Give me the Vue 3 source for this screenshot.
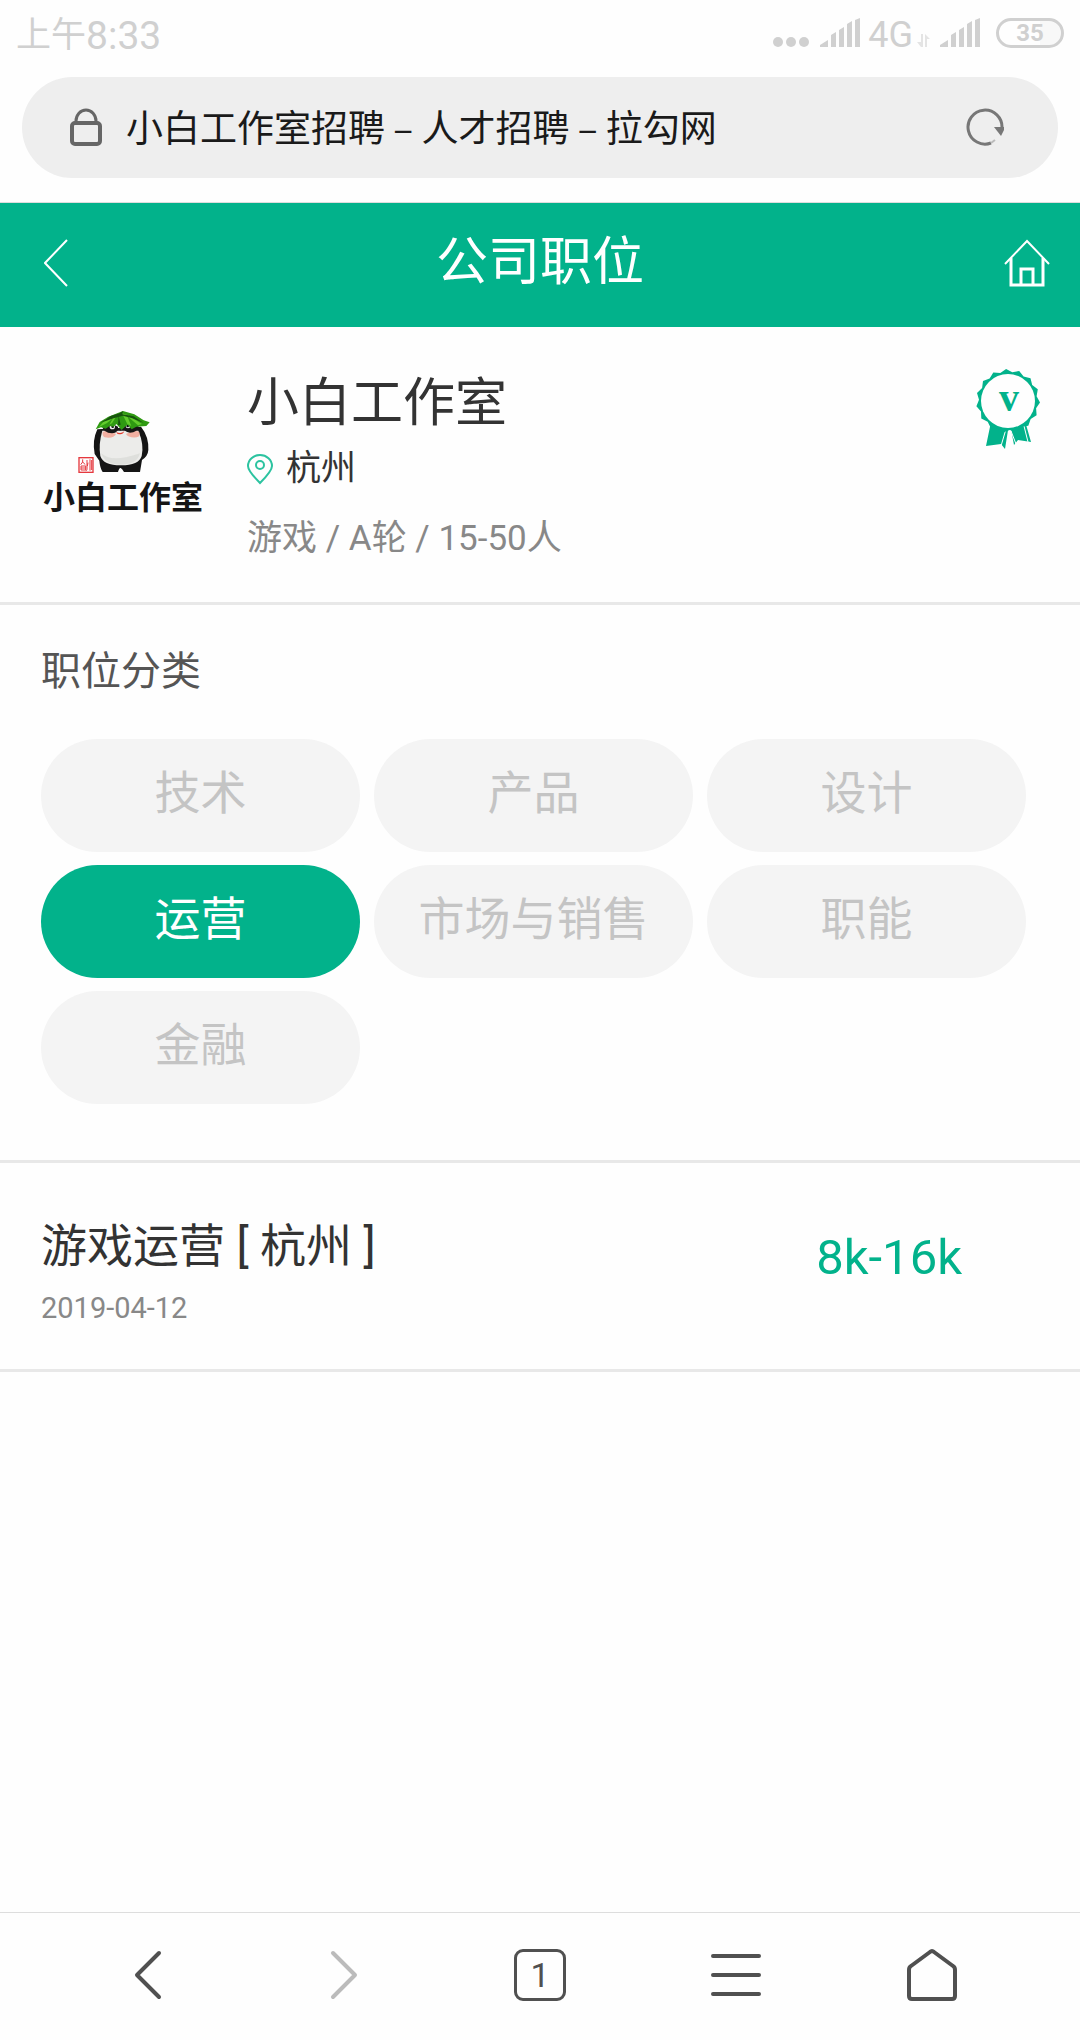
<script setup>
import { ref } from 'vue';

const address = ref('小白工作室招聘 – 人才招聘 – 拉勾网');
const categories = ['技术', '产品', '设计', '运营', '市场与销售', '职能', '金融'];
const current = ref('运营');

const jobs = [
  { id: 1, name: '游戏运营', city: '杭州', date: '2019-04-12', salary: '8k-16k', type: '运营' }
];

// Toothed edge of the medal
const teeth = 15;
const medalEdge = Array.from({ length: teeth * 2 }, (_, i) => {
  const angle = (Math.PI * i) / teeth - Math.PI / 2 - 0.06;
  const r = i % 2 ? 29 : 32;
  return `${(32 + r * Math.cos(angle)).toFixed(1)},${(32 + r * Math.sin(angle)).toFixed(1)}`;
}).join(' ');
</script>

<template>
  <div class="page">
    <!-- Status bar -->
    <div class="status-bar">
      <div class="clock"><span>上午</span><span class="digits">8:33</span></div>
      <div class="status-icons">
        <svg class="dots" width="36" height="30" viewBox="0 0 36 30">
          <circle cx="5" cy="24" r="5" />
          <circle cx="18" cy="24" r="5" />
          <circle cx="31" cy="24" r="5" />
        </svg>
        <svg class="signal" width="40" height="30" viewBox="0 0 40 30">
          <path d="M0 29v-2l8-5v7zM11 29V17l5-3v15zM19 29V12l5-3v20zM27 29V6l5-3v26zM35 29V2l5-2v29z" />
        </svg>
        <span class="network">4G</span>
        <svg class="arrows" width="13" height="13" viewBox="0 0 13 13">
          <path d="M4 0h2v13H4L0 8h4zM8 13V0l5 5h-3v8z" />
        </svg>
        <svg class="signal second" width="40" height="30" viewBox="0 0 40 30">
          <path d="M0 29v-2l8-5v7zM11 29V17l5-3v15zM19 29V12l5-3v20zM27 29V6l5-3v26zM35 29V2l5-2v29z" />
        </svg>
        <span class="battery">35</span>
      </div>
    </div>

    <!-- Address bar -->
    <div class="address-wrap">
      <div class="address-bar">
        <svg width="32" height="38" viewBox="0 0 32 38" fill="none" stroke="#666" stroke-width="4">
          <rect x="2" y="15" width="28" height="21" rx="3" />
          <path d="M6 15v-2a10 11 0 0 1 20 0v2" stroke-width="3" />
        </svg>
        <input v-model="address" type="text" aria-label="地址" />
        <button class="icon-btn" aria-label="刷新">
          <svg width="38" height="38" viewBox="0 0 38 38">
            <path d="M36 20A17 17 0 1 0 25 35" fill="none" stroke="#777" stroke-width="3" />
            <path d="M25 35l4-3" fill="none" stroke="#bbb" stroke-width="2" />
            <path d="M28 19h10v3l-3 6z" fill="#777" />
          </svg>
        </button>
      </div>
    </div>

    <header class="nav">
      <button class="back" aria-label="返回">
        <svg width="24" height="48" viewBox="0 0 24 48">
          <path d="M23 1L1 24l22 23" fill="none" stroke="#fff" stroke-width="2" />
        </svg>
      </button>
      <h1>公司职位</h1>
      <a href="#" aria-label="首页">
        <svg width="46" height="48" viewBox="0 0 46 48" fill="none" stroke="#fff" stroke-width="2">
          <path d="M1 25L23 2l22 23" />
          <path d="M7 19v27h32V19" stroke-width="3" />
          <path d="M17 46V30h12v16" stroke-width="3" />
        </svg>
      </a>
    </header>

    <section class="company">
      <div class="logo">
        <svg width="162" height="64" viewBox="36 60 486 192">
          <path d="M202 118q-16 34-8 74l14 20q2 22 10 34h46q4-14 8-12t10 12h48l6-36q18-12 19-30 2-40-22-70z" fill="#151515" />
          <path d="M217 122q-12 40 -6 76 8 28 62 28t62-28q8-34-10-76z" fill="#ececea" />
          <path d="M214 190q30 30 116 0-8 34-58 34-48 0-58-34z" fill="#d9dad6" opacity="0.7" />
          <path d="M218 126q14-8 40 6-6 14-34 10-8-4-6-16zM288 132q22-14 40-6 4 14-8 16-26 2-32-10z" fill="#f3a08e" opacity="0.8" />
          <path d="M216 106q20-12 48 4 4 18-18 20-26 0-30-24zM280 108q22-12 46 0-4 20-26 20-20-2-20-20z" fill="#161616" />
          <circle cx="247" cy="110" r="8" fill="#eee" />
          <circle cx="248" cy="110" r="4" fill="#111" />
          <circle cx="294" cy="108" r="7" fill="#eee" />
          <circle cx="293" cy="108" r="4" fill="#111" />
          <path d="M262 116q9-6 17 0l-8 6z" fill="#222" />
          <path d="M258 125q13 8 25-1-4 10-14 9-8 0-11-8z" fill="#e23a2c" />
          <path d="M197 118l12-22 26-16 36-14 8-3 34 10 28 18 18 6-10 11-30 2-14 8-12-14-8 6-10 10-16-18-8 8-12-2-12 8-14-4z" fill="#2f9a12" />
          <path d="M206 112l22-26 40-16-38 30zM276 70l16 32 12 6-14-34zM292 74l44 28-12 4-30-26zM262 74l-16 26-8 4 16-28z" fill="#62cc2c" />
          <path d="M212 98l30-20 28-9 9-6-2 10 34 6 30 20-34-14-28-8-28 8zM266 78l6 26-8 2z" fill="#17540d" />
          <rect x="147" y="203" width="42" height="44" fill="none" stroke="#e5383e" stroke-width="4" />
          <path d="M158 208v8l-6 8M158 216l8 8M153 228h14v12h-14zM153 234h14M171 210v28q0 4-4 4M180 208v34M174 218l-2 10M185 210v30" fill="none" stroke="#e5383e" stroke-width="3" />
        </svg>
        <span>小白工作室</span>
      </div>
      <div class="company-info">
        <h2>小白工作室</h2>
        <p class="city">
          <svg width="26" height="31" viewBox="0 0 26 31" fill="none" stroke="#2cc3a0" stroke-width="2">
            <path d="M13 29Q1 17 1 12a12 11 0 0 1 24 0q0 5-12 17z" />
            <circle cx="13" cy="11" r="4" />
          </svg>
          <span>杭州</span>
        </p>
        <p class="tags">游戏 / A轮 / 15-50人</p>
      </div>
      <svg class="medal" width="64" height="80" viewBox="0 0 64 80">
        <path d="M15 53L10 77l15-2 4 5 4-25zM34 55l4 21 4-5 13 2-6-21z" fill="#02b28b" />
        <path d="M30 60l-5 17M35 62l5 13M48 57l4 16" fill="none" stroke="#fff" stroke-width="1" />
        <polygon :points="medalEdge" fill="#02b28b" />
        <circle cx="32" cy="32" r="27" fill="#fefefe" />
        <text x="33" y="42" text-anchor="middle">v</text>
      </svg>
    </section>

    <section class="category">
      <h3>职位分类</h3>
      <div class="category-list">
        <button
          v-for="item in categories"
          :key="item"
          :class="{ active: item === current }"
          @click="current = item"
        >{{ item }}</button>
      </div>
    </section>

    <ul class="jobs">
      <li v-for="job in jobs" v-show="job.type === current" :key="job.id">
        <div>
          <a href="#" class="job-name">{{ job.name }} [ {{ job.city }} ]</a>
          <span class="job-date">{{ job.date }}</span>
        </div>
        <span class="salary">{{ job.salary }}</span>
      </li>
    </ul>

    <!-- Browser toolbar -->
    <nav class="toolbar">
      <button aria-label="后退">
        <svg width="28" height="50" viewBox="0 0 28 50">
          <path d="M25 3L3 25l22 22" />
        </svg>
      </button>
      <button class="disabled" aria-label="前进">
        <svg width="28" height="50" viewBox="0 0 28 50">
          <path d="M3 3l22 22L3 47" />
        </svg>
      </button>
      <button aria-label="标签页"><span class="tabs">1</span></button>
      <button aria-label="菜单">
        <svg width="50" height="44" viewBox="0 0 50 44">
          <path d="M2 3h46M2 22h46M2 41h46" />
        </svg>
      </button>
      <button aria-label="主页">
        <svg width="50" height="52" viewBox="0 0 50 52">
          <path d="M23 3q2-2 4 0l19 14q2 1 2 4v26q0 3-3 3H5q-3 0-3-3V21q0-3 2-4z" />
        </svg>
      </button>
    </nav>
  </div>
</template>

<style>
body {
  margin: 0;
  background: #fefefe;
}
</style>

<style scoped>
.page {
  min-height: 100vh;
  display: flex;
  flex-direction: column;
  background: #fefefe;
  color: #333;
  font-family: Roboto, 'Noto Sans CJK SC', sans-serif;
}

h1, h2, h3, p, ul {
  margin: 0;
  padding: 0;
  font-weight: 400;
}

svg { display: block; flex: none; }
a { color: inherit; text-decoration: none; }

button {
  border: none;
  padding: 0;
  background: none;
  color: inherit;
  font-family: inherit;
  cursor: pointer;
}

/* Status bar */
.status-bar {
  height: 77px;
  padding: 0 16px;
  display: flex;
  justify-content: space-between;
  align-items: flex-start;
  color: #d0d0d0;
}

.clock {
  display: flex;
  align-items: center;
  padding-top: 10px;
  line-height: 52px;
  font-size: 35px;
}

.clock .digits { font-size: 39px; }

.status-icons {
  display: flex;
  align-items: center;
  padding-top: 18px;
  height: 30px;
  fill: #d0d0d0;
}

.dots { margin-right: 11px; }
.network { margin-left: 8px; padding-top: 3px; font-size: 36px; line-height: 30px; }
.arrows { margin: 14px 10px 0 4px; fill: #e4e4e4; }

.battery {
  box-sizing: border-box;
  width: 68px;
  height: 30px;
  margin-left: 16px;
  border: 3px solid #d0d0d0;
  border-radius: 15px;
  background: linear-gradient(90deg, #fefefe 66%, #f8f8f8 66%);
  background-clip: padding-box;
  font-size: 24px;
  line-height: 25px;
  font-weight: 700;
  text-align: center;
}

/* Address bar */
.address-wrap {
  padding: 0 22px 24px;
  border-bottom: 1px solid #ddd;
}

.address-bar {
  box-sizing: border-box;
  height: 101px;
  padding: 0 54px 2px 48px;
  display: flex;
  align-items: center;
  border-radius: 51px;
  background: #eee;
}

.address-bar input {
  flex: 1;
  min-width: 0;
  margin: 0 24px;
  padding: 0 0 2px;
  border: none;
  outline: none;
  background: none;
  color: #1a1a1a;
  font-family: 'Noto Sans CJK SC', sans-serif;
  font-size: 37px;
}

/* Page header */
.nav {
  box-sizing: border-box;
  height: 124px;
  padding: 0 30px 4px;
  display: flex;
  align-items: center;
  justify-content: space-between;
  background: #02b28b;
  color: #fff;
}

.back {
  box-sizing: border-box;
  width: 46px;
  padding-left: 14px;
}

.nav h1 {
  font-size: 52px;
  line-height: 60px;
}

/* Company */
.company {
  display: flex;
  align-items: flex-start;
  padding: 42px 40px 24px 42px;
  border-bottom: 3px solid #e8e8e8;
}

.logo {
  width: 162px;
  padding-top: 41px;
  display: flex;
  flex-direction: column;
  align-items: center;
}

.logo span {
  padding-top: 4px;
  color: #151515;
  font-size: 32px;
  line-height: 40px;
  font-weight: 700;
}

.company-info {
  flex: 1;
  margin-left: 43px;
}

.company-info h2 {
  font-size: 52px;
  line-height: 70px;
}

.city {
  display: flex;
  align-items: center;
  gap: 13px;
  font-size: 35px;
  line-height: 60px;
}

.tags {
  color: #888;
  font-size: 35px;
  line-height: 79px;
}

.medal text {
  fill: #02b28b;
  font-family: 'Liberation Serif', serif;
  font-size: 40px;
  font-weight: 700;
}

/* Categories */
.category {
  padding: 40px 54px 56px 41px;
  border-bottom: 3px solid #e8e8e8;
}

.category h3 {
  color: #555;
  font-size: 40px;
  line-height: 54px;
}

.category-list {
  display: grid;
  grid-template-columns: repeat(3, 1fr);
  gap: 13px 14px;
  padding-top: 40px;
}

.category-list button {
  height: 113px;
  padding-bottom: 14px;
  border-radius: 57px;
  background: #f4f4f4;
  color: #c4c4c4;
  font-size: 46px;
}

.category-list .active {
  background: #02b28b;
  color: #fff;
}

/* Job list */
.jobs { list-style: none; }

.jobs li {
  display: flex;
  justify-content: space-between;
  align-items: center;
  padding: 48px 118px 34px 41px;
  border-bottom: 3px solid #e8e8e8;
}

.job-name {
  display: block;
  font-size: 46px;
  line-height: 70px;
}

.job-date {
  display: block;
  color: #888;
  font-size: 29px;
  line-height: 54px;
}

.salary {
  padding-bottom: 32px;
  color: #02b28b;
  font-size: 49px;
}

/* Toolbar */
.toolbar {
  display: flex;
  height: 124px;
  margin-top: auto;
  padding: 0 50px 3px;
  border-top: 1px solid #ddd;
}

.toolbar button {
  flex: 1;
  display: flex;
  align-items: center;
  justify-content: center;
  color: #505050;
}

.toolbar .disabled { color: #bbb; }

.toolbar path {
  fill: none;
  stroke: currentColor;
  stroke-width: 4;
  stroke-linecap: round;
  stroke-linejoin: round;
}

.tabs {
  box-sizing: border-box;
  width: 52px;
  height: 52px;
  border: 3px solid #505050;
  border-radius: 9px;
  font-size: 34px;
  line-height: 47px;
}
</style>
